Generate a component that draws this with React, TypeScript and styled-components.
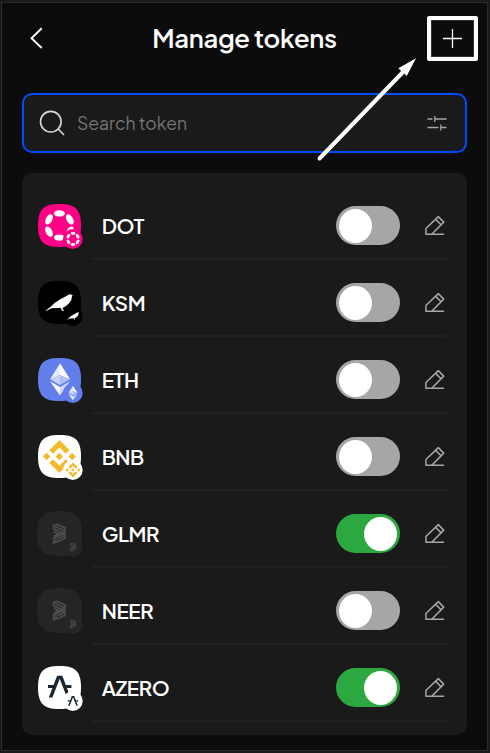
import React, { useState } from 'react';
import styled, { createGlobalStyle } from 'styled-components';

const GlobalStyle = createGlobalStyle`
  *, *::before, *::after { box-sizing: border-box; }
  html, body { margin: 0; height: 100%; background: #1a1a1a; overflow: hidden; }
  body { font-family: 'Plus Jakarta Sans', Inter, 'Liberation Sans', sans-serif; color: #fff; }
  button { border: 0; padding: 0; margin: 0; background: none; font: inherit; color: inherit; cursor: pointer; }
  svg { display: block; flex: none; overflow: visible; }
`;

const Page = styled.div`
  height: 753px;
  width: 490px;
  padding: 2px 2px 2px 1px;
`;

const Popup = styled.main`
  position: relative;
  width: 487px;
  height: 749px;
  border: 1px solid #2b2b2b;
  background: #0c0c0c;
  padding: 0 20px;
`;

const Header = styled.header`
  height: 90px;
  display: grid;
  grid-template-columns: 50px 1fr 50px;
  align-items: start;
  margin-right: -10px;
`;

const BackButton = styled.button`
  width: 24px;
  height: 24px;
  margin: 23px 0 0 2px;
`;

const Title = styled.h1`
  margin: 18px 0 0;
  text-align: center;
  white-space: nowrap;
  font-size: 25.6px;
  line-height: 34px;
  font-weight: 650;
  letter-spacing: -0.33px;
  padding-right: 10px;
`;

const AddButton = styled.button`
  width: 51px;
  height: 45px;
  margin-top: 13px;
  border: 4px solid #fff;
  border-radius: 2px;
  box-shadow: inset 0 0 0 1px #333;
  display: grid;
  place-items: center;
`;

const SearchBox = styled.label`
  height: 60px;
  display: flex;
  align-items: center;
  border: 2px solid #004bff;
  border-radius: 10px;
  background: #1a1a1a;
  padding: 0 18px 0 15px;
`;

const Placeholder = styled.span`
  flex: 1;
  margin-left: 12px;
  font-size: 17.5px;
  line-height: 24px;
  font-weight: 400;
  letter-spacing: 0.05px;
  color: #757575;
`;

const TokenList = styled.ul`
  list-style: none;
  margin: 20px 0 0;
  padding: 14px 20px 9px 15px;
  height: 562px;
  border-radius: 10px;
  background: #1a1a1a;
  overflow: hidden;
`;

const TokenRow = styled.li`
  height: 77px;
  display: grid;
  grid-template-columns: 55px 1fr;
`;

const IconCell = styled.div`
  padding: 17px 0 0 1px;
`;

const RowBody = styled.div`
  height: 73px;
  display: flex;
  align-items: flex-start;
  border-bottom: 2px solid #212121;
`;

const Symbol = styled.span<{ $spacing: number }>`
  flex: 1;
  margin: 25px 0 0 9.7px;
  font-size: 20.48px;
  line-height: 28px;
  font-weight: 600;
  letter-spacing: ${p => p.$spacing}px;
`;

const Switch = styled.button<{ $on: boolean }>`
  width: 64px;
  height: 39px;
  margin-top: 19px;
  padding: 3px;
  border-radius: 20px;
  display: flex;
  justify-content: ${p => (p.$on ? 'flex-end' : 'flex-start')};
  background: ${p => (p.$on ? '#2da73f' : '#a6a6a6')};
`;

const Knob = styled.span`
  width: 33px;
  height: 34px;
  border-radius: 50%;
  background: #fff;
`;

const EditButton = styled.button`
  width: 23px;
  height: 22px;
  margin: 28px 0 0 24px;
`;

const ArrowOverlay = styled.svg`
  position: absolute;
  left: 310px;
  top: 47px;
  pointer-events: none;
`;

type Kind = 'dot' | 'ksm' | 'eth' | 'bnb' | 'placeholder' | 'azero';

const backgrounds: Record<Kind, string> = {
  dot: '#ff0086',
  ksm: '#000',
  eth: '#627eea',
  bnb: '#fff',
  placeholder: '#252525',
  azero: '#fff',
};

/* Marks are drawn round the origin, so one drawing serves the logo and its badge. */
function Mark({ kind }: { kind: Kind }) {
  switch (kind) {
    case 'dot':
      return (
        <g fill="#fff">
          <ellipse cy="-12.1" rx="5.5" ry="3.2" />
          <ellipse cy="12.1" rx="5.5" ry="3.2" />
          <ellipse cx="-10.4" cy="-6.1" rx="5.6" ry="3.2" transform="rotate(-60 -10.4 -6.1)" />
          <ellipse cx="10.4" cy="-6.1" rx="5.6" ry="3.2" transform="rotate(60 10.4 -6.1)" />
          <ellipse cx="-10.4" cy="6.1" rx="5.6" ry="3.2" transform="rotate(60 -10.4 6.1)" />
          <ellipse cx="10.4" cy="6.1" rx="5.6" ry="3.2" transform="rotate(-60 10.4 6.1)" />
        </g>
      );
    case 'ksm':
      return (
        <path
          fill="#fff"
          d="M-13.8 8.2 -8.5 4 -4.5 .2 Q1-3.6 4.8-5.2 L8.6-7.5 Q10.4-9 12-7.8 L13.4-7 12.6-6.2 Q12.7-2.4 9.6.8 7 3.8 3.8 5 L3 6.1 4.8 8.5 2.8 8.2 1 5.2 Q-2 5.6-5 5.5 L-8.5 6.1-13.2 8.6Z"
        />
      );
    case 'eth':
      return (
        <g fill="#fff">
          <path fillOpacity=".85" d="M0-16.1V-4.4L-10 0Z" />
          <path d="M0-16.1V-4.4L10 0Z" fillOpacity=".98" />
          <path fillOpacity=".65" d="M-10 0 0-4.4V5.7Z" />
          <path fillOpacity=".5" d="M10 0 0-4.4V5.7Z" />
          <path fillOpacity=".95" d="M-10 2 0 7.7V16.1Z" />
          <path fillOpacity=".7" d="M10 2 0 7.7V16.1Z" />
        </g>
      );
    case 'bnb':
      return (
        <path
          fill="#f3ba2f"
          transform="scale(1.65) translate(-16 -16)"
          d="M12.116 14.404 16 10.52l3.886 3.886 2.26-2.26L16 6l-6.144 6.144 2.26 2.26zM6 16l2.26-2.26L10.52 16l-2.26 2.26L6 16zm6.116 1.596L16 21.48l3.886-3.886 2.26 2.259L16 26l-6.147-6.147 2.263-2.257zM21.48 16l2.26-2.26L26 16l-2.26 2.26L21.48 16zm-3.188 0L16 18.294 13.706 16 16 13.706 18.292 16z"
        />
      );
    case 'azero':
      return (
        <g fill="#1b262f">
          <path d="M-2.6-11.2H2.6L10.9 10.4H7.3L0-8.3-7.3 10.4H-10.9Z" />
          <path d="M-11.7-1.9H-4.8V1.1H-11.7ZM4.8-1.9H11.7V1.1H4.8Z" />
        </g>
      );
    default:
      return (
        <g fill="none" stroke="#4c4c4c" strokeWidth="1.7" strokeLinejoin="miter">
          <path d="M-5.8-4.6V-8L-2-9 5.8-5.6V-2.2L-5.6 2.6M-4.4-7 5-2.9M-5.7-4.4 3.2-.7M-5.7-1.8 .5 .9M5.8-.6-5.8 4.4V9.4L-3.4 8.4V4.8M5.8 0V4.8L-2.4 8.4M5 2.2-1.6 5.1" />
        </g>
      );
  }
}

function TokenIcon({ kind }: { kind: Kind }) {
  const blank = kind === 'placeholder';
  return (
    <svg width="43" height="43" viewBox="0 0 43 43" fill={backgrounds[kind]}>
      <path
        d="M21.5 0C37.5 0 43 5.5 43 21.5S37.5 43 21.5 43 0 37.5 0 21.5 5.5 0 21.5 0Z"
        transform={blank ? 'translate(-1 -1) scale(1.047)' : undefined}
      />
      <g transform={kind === 'eth' ? 'translate(22 21.3)' : kind === 'azero' ? 'translate(21.7 21)' : 'translate(21.4 21.5)'}>
        <Mark kind={kind} />
      </g>
      <circle cx="34.8" cy="35" r="9.9" />
      <g transform="translate(35 35) scale(0.45)">
        <Mark kind={kind} />
      </g>
    </svg>
  );
}

const tokens: { symbol: string; kind: Kind; on: boolean; spacing: number }[] = [
  { symbol: 'DOT', kind: 'dot', on: false, spacing: -0.3 },
  { symbol: 'KSM', kind: 'ksm', on: false, spacing: -0.4 },
  { symbol: 'ETH', kind: 'eth', on: false, spacing: -0.4 },
  { symbol: 'BNB', kind: 'bnb', on: false, spacing: -0.5 },
  { symbol: 'GLMR', kind: 'placeholder', on: true, spacing: -0.4 },
  { symbol: 'NEER', kind: 'placeholder', on: false, spacing: -0.4 },
  { symbol: 'AZERO', kind: 'azero', on: true, spacing: -0.4 },
];

function TokenItem({ token }: { token: (typeof tokens)[number] }) {
  const [on, setOn] = useState(token.on);
  return (
    <TokenRow>
      <IconCell>
        <TokenIcon kind={token.kind} />
      </IconCell>
      <RowBody>
        <Symbol $spacing={token.spacing}>{token.symbol}</Symbol>
        <Switch $on={on} role="switch" aria-checked={on} onClick={() => setOn(!on)}>
          <Knob />
        </Switch>
        <EditButton aria-label="Edit">
          <svg width="22" height="22" viewBox="0 0 22 22" fill="none" stroke="#a6a6a6" strokeWidth="1.5" strokeLinejoin="round" strokeLinecap="round">
            <path d="M8 19.2H1.9V13.5L14.3 1.6 19.7 7.1 7.8 19.2H19.6M11.7 4.4 17 9.7" />
          </svg>
        </EditButton>
      </RowBody>
    </TokenRow>
  );
}

export default function App() {
  return (
    <Page>
      <GlobalStyle />
      <Popup>
        <Header>
          <BackButton aria-label="Back">
            <svg width="24" height="24" viewBox="0 0 24 24" fill="none" stroke="#fff" strokeWidth="1.9">
              <path d="M17.7 2.3 7.5 12.2 17.7 22" />
            </svg>
          </BackButton>
          <Title>Manage tokens</Title>
          <AddButton aria-label="Add token">
            <svg width="19" height="19" viewBox="0 0 19 19" stroke="#fff" strokeWidth="1.3">
              <path d="M9.5 0V19M0 9.5H19" />
            </svg>
          </AddButton>
        </Header>
        <SearchBox>
          <svg width="26" height="26" viewBox="0 0 26 26" fill="none" stroke="#dadada" strokeWidth="1.6">
            <circle cx="11.8" cy="11.7" r="10.3" />
            <path d="M19 18.8 25 25" />
          </svg>
          <Placeholder>Search token</Placeholder>
          <svg width="20" height="16" viewBox="0 0 20 16" stroke="#a6a6a6" strokeWidth="1.3">
            <path d="M.5 4H5.5M7.8 4H19.5M7.8 1V7M.5 12.5H11.5M13.8 12.5H19.5M13.8 9.5V15.5" />
          </svg>
        </SearchBox>
        <TokenList>
          {tokens.map(token => (
            <TokenItem key={token.symbol} token={token} />
          ))}
        </TokenList>
        <ArrowOverlay width="110" height="120" viewBox="312 50 110 120">
          <path d="M319.5 158.5 404 71" stroke="#fff" strokeWidth="4" strokeLinecap="round" />
          <path d="M416 58.3 398.3 68.3 401.5 71.2 404.2 73.3 406.7 76Z" fill="#fff" />
        </ArrowOverlay>
      </Popup>
    </Page>
  );
}
